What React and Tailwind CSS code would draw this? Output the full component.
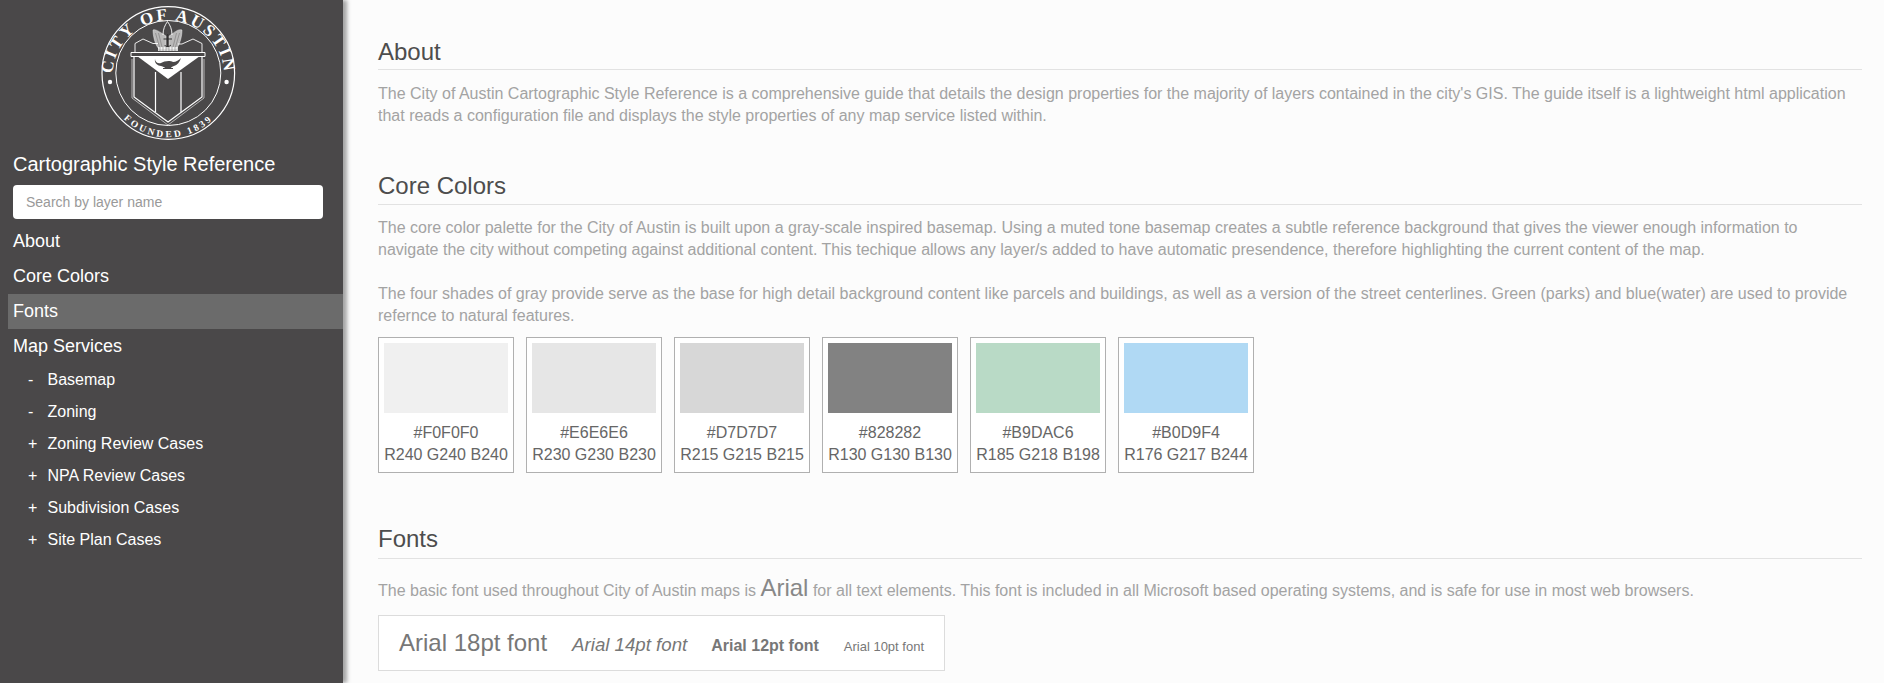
import React from "react";

const swatches = [
  { hex: "#F0F0F0", rgb: "R240 G240 B240", bg: "bg-[#f0f0f0]" },
  { hex: "#E6E6E6", rgb: "R230 G230 B230", bg: "bg-[#e6e6e6]" },
  { hex: "#D7D7D7", rgb: "R215 G215 B215", bg: "bg-[#d7d7d7]" },
  { hex: "#828282", rgb: "R130 G130 B130", bg: "bg-[#828282]" },
  { hex: "#B9DAC6", rgb: "R185 G218 B198", bg: "bg-[#b9dac6]" },
  { hex: "#B0D9F4", rgb: "R176 G217 B244", bg: "bg-[#b0d9f4]" },
];

const services = [
  { sign: "-", name: "Basemap" },
  { sign: "-", name: "Zoning" },
  { sign: "+", name: "Zoning Review Cases" },
  { sign: "+", name: "NPA Review Cases" },
  { sign: "+", name: "Subdivision Cases" },
  { sign: "+", name: "Site Plan Cases" },
];

const Seal = () => (
  <svg viewBox="90 0 160 145" className="block w-[160px] h-[145px] ml-[90px]">
    <defs>
      <path id="sealTop" d="M114 90 A56 56 0 1 1 222.600 90" />
      <path id="sealBottom" d="M106 85 A63.500 63.500 0 0 0 231 85" />
    </defs>
    <circle cx="168.3" cy="73" r="66.3" fill="none" stroke="#fff" strokeWidth="1.2" />
    <circle cx="168.3" cy="73" r="52.5" fill="none" stroke="#fff" strokeWidth="1" />
    <circle cx="110" cy="82" r="2.2" fill="#fff" />
    <circle cx="226.6" cy="82" r="2.2" fill="#fff" />
    <text fill="#fff" fontFamily="'Liberation Serif', serif" fontWeight="700" fontSize="17" letterSpacing="2.4">
      <textPath href="#sealTop" startOffset="50%" textAnchor="middle">CITY OF AUSTIN</textPath>
    </text>
    <text fill="#fff" fontFamily="'Liberation Serif', serif" fontWeight="700" fontSize="9.5" letterSpacing="2.6">
      <textPath href="#sealBottom" startOffset="50%" textAnchor="middle">FOUNDED 1839</textPath>
    </text>
    {/* shield */}
    <path d="M131 52.500 H205 V56.500 H131 Z" fill="none" stroke="#fff" strokeWidth="1" />
    <path d="M134 57 V97 L168 122 L202 97 V57" fill="none" stroke="#fff" strokeWidth="1.2" />
    <path d="M132 59 V98 L168 125 L204 98 V59" fill="none" stroke="#fff" strokeWidth="0.6" />
    <path d="M137 56 L168 79 L200 56 Z" fill="#fff" />
    <path d="M155.500 72 V112 M181 72 V112" stroke="#fff" strokeWidth="1.2" />
    {/* lamp */}
    <path d="M155 59 C155 62 158 64 161 63 C164 61 170 60 173 62 C176 62 179 60 181 58 C180 62 177 65 174 66 C172 67 171 67 171 68 H173 V69 H163 V68 H165 C165 67 163 67 161 66 C158 66 154 63 155 59 Z" fill="#4a4849" />
    {/* mantling */}
    <path d="M135 52 V43.500 L143 39 L153 43.500 M202 52 V43.500 L193 39 L182 44 M153 43.500 H158 M182 44 H178" fill="none" stroke="#fff" strokeWidth="0.9" />
    {/* crest */}
    <path d="M163 34 C157 30 154 29 153 30 C153 36 155 45 159 49 H166 V36 Z M172 34 C177 30 180 29 182 30 C182 36 180 45 176 49 H169 V36 Z" fill="#fff" fillOpacity="0.62" stroke="#fff" strokeWidth="0.4" />
    <path d="M155.500 33 L159.500 47 M158.500 33 L162 47 M179.500 33 L175.500 47 M176.500 33 L173 47" stroke="#4a4849" strokeWidth="0.35" />
    <path d="M163 35 C163 29 165 25 167.500 21.500 C170 25 172 29 172 35" fill="none" stroke="#fff" strokeWidth="0.9" />
    <path d="M167.700 34 V47 M163.500 39 H172 M164.500 45 C166 47 169 47 171 45" fill="none" stroke="#2f2e2f" strokeWidth="1" />
    <rect x="158" y="47" width="20" height="4" fill="#fff" fillOpacity="0.78" />
    <path d="M160 47 V51 M163 47 V51 M166 47 V51 M169 47 V51 M172 47 V51 M175 47 V51" stroke="#4a4849" strokeWidth="0.4" />
  </svg>
);

const NavLink = ({ label, active }) => (
  <div className={`h-[35px] ml-2 pl-[5px] flex items-center text-[18px] text-white ${active ? "bg-[#6b6b6b]" : ""}`}>
    {label}
  </div>
);

const Heading = ({ children, className = "pb-[2px]" }) => (
  <h2 className={`text-[24px] leading-[32px] text-[#4d4d4d] border-b border-[#e2e2e2] ${className}`}>{children}</h2>
);

const Para = ({ children, className = "" }) => (
  <p className={`text-[16px] leading-[22px] text-[#a3a3a3] ${className}`}>{children}</p>
);

export default function App() {
  return (
    <div className="flex h-screen overflow-hidden bg-[#fcfcfc] font-['Liberation_Sans',Arial,sans-serif]">
      <aside className="w-[343px] shrink-0 bg-[#4a4849] shadow-[4px_0_4px_rgba(0,0,0,0.35)] z-10">
        <Seal />
        <h1 className="mt-[5px] ml-[13px] text-[20px] leading-[28px] text-white">Cartographic Style Reference</h1>
        <div className="mt-[7px] ml-[13px] w-[310px] h-[34px] bg-white rounded-[4px] flex items-center pl-[13px] text-[14px] text-[#999]">
          Search by layer name
        </div>
        <nav className="mt-[5px]">
          <NavLink label="About" />
          <NavLink label="Core Colors" />
          <NavLink label="Fonts" active />
          <NavLink label="Map Services" />
          <ul>
            {services.map((s) => (
              <li key={s.name} className="h-[32px] flex items-center text-[16px] text-white">
                <span className="w-[47.500px] pl-[28px]">{s.sign}</span>
                {s.name}
              </li>
            ))}
          </ul>
        </nav>
      </aside>

      <main className="flex-1 pl-[35px] pr-[22px] pt-[36px]">
        <section>
          <Heading className="pb-[1px]">About</Heading>
          <Para className="mt-[13px] pr-[6px]">
            The City of Austin Cartographic Style Reference is a comprehensive guide that details the design properties for the majority of layers contained in the city's GIS. The guide itself is a lightweight html application that reads a configuration file and displays the style properties of any map service listed within.
          </Para>
        </section>

        <section className="mt-[43px]">
          <Heading>Core Colors</Heading>
          <Para className="mt-[12px] pr-[6px]">
            The core color palette for the City of Austin is built upon a gray-scale inspired basemap. Using a muted tone basemap creates a subtle reference background that gives the viewer enough information to navigate the city without competing against additional content. This techique allows any layer/s added to have automatic presendence, therefore highlighting the current content of the map.
          </Para>
          <Para className="mt-[22px] pr-[6px]">
            The four shades of gray provide serve as the base for high detail background content like parcels and buildings, as well as a version of the street centerlines. Green (parks) and blue(water) are used to provide refernce to natural features.
          </Para>
          <div className="flex gap-3 mt-[10px]">
            {swatches.map((s) => (
              <div key={s.hex} className="w-[136px] h-[136px] border border-[#b0b0b0] bg-white px-[5px] pt-[5px] text-center text-[16px] leading-[22px] text-[#666]">
                <div className={`h-[70px] ${s.bg}`} />
                <div className="mt-[9px] whitespace-nowrap">{s.hex}</div>
                <div className="whitespace-nowrap">{s.rgb}</div>
              </div>
            ))}
          </div>
        </section>

        <section className="mt-[50px]">
          <Heading className="pb-[3px]">Fonts</Heading>
          <Para className="mt-[14px] leading-[30px]">
            The basic font used throughout City of Austin maps is <span className="text-[24px] text-[#888]">Arial</span> for all text elements. This font is included in all Microsoft based operating systems, and is safe for use in most web browsers.
          </Para>
          <div className="mt-[9px] w-[567px] h-[56px] border border-[#dcdcdc] bg-white flex items-baseline pt-[9px] pl-[20px] text-[#777] whitespace-nowrap">
            <span className="text-[24px]">Arial 18pt font</span>
            <span className="ml-[25px] text-[18.67px] italic">Arial 14pt font</span>
            <span className="ml-[24px] text-[16px] font-bold">Arial 12pt font</span>
            <span className="ml-[25px] text-[13px]">Arial 10pt font</span>
          </div>
        </section>
      </main>
    </div>
  );
}
